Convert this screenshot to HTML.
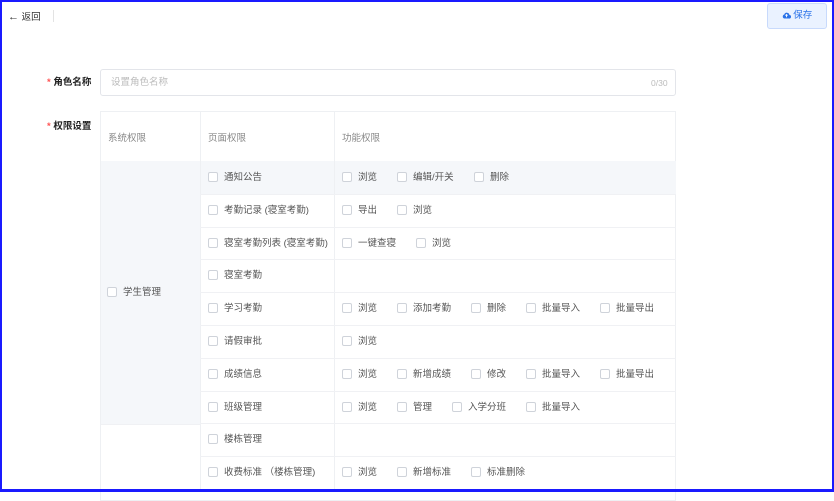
<!DOCTYPE html>
<html><head><meta charset="utf-8"><style>
*{margin:0;padding:0;box-sizing:border-box}
body{width:834px;height:492px;overflow:hidden;background:#fff;font-family:"Liberation Sans","Noto Sans CJK SC",sans-serif;font-size:9.5px;line-height:14px;color:#444;position:relative}
.frame{position:absolute;inset:0;border:2px solid #1a1aff;border-bottom-width:3px;pointer-events:none;z-index:10}
.a{position:absolute;white-space:nowrap}
.cb{position:absolute;width:10px;height:10px;border:1px solid #cfd3da;border-radius:2px;background:#fff}
.t{color:#555}
</style></head><body>
<div class="frame"></div>
<div class="a" style="left:8px;top:10px;font-size:9.5px;color:#333"><span style="font-size:11px">←</span> 返回</div>
<div class="a" style="left:53px;top:10px;width:1px;height:12px;background:#e3e3e3"></div>
<div class="a" style="left:767px;top:3px;width:60px;height:26px;background:#eaf2ff;border:1px solid #c8dafc;border-radius:3px;color:#2a72e8;font-size:9.5px;line-height:24px;text-align:center">
<svg width="9" height="8" viewBox="0 0 10 9" style="vertical-align:-1px"><path d="M2.5 8.5h5.5a2 2 0 0 0 .3-4 3 3 0 0 0-5.8-.6A2.4 2.4 0 0 0 2.5 8.5z" fill="#2a72e8"/><path d="M5 7V4M3.8 5.2L5 4l1.2 1.2" stroke="#fff" stroke-width="1" fill="none"/></svg> 保存</div>

<div class="a" style="left:47px;top:76px;font-size:9.5px;color:#222;font-weight:bold"><span style="color:#f55">*</span> 角色名称</div>
<div class="a" style="left:100px;top:69px;width:576px;height:27px;border:1px solid #e3e5ea;border-radius:3px"></div>
<div class="a" style="left:111px;top:76px;color:#bbb">设置角色名称</div>
<div class="a" style="left:651px;top:76px;color:#bbb;font-size:8.5px">0/30</div>

<div class="a" style="left:47px;top:120px;font-size:9.5px;color:#222;font-weight:bold"><span style="color:#f55">*</span> 权限设置</div>
<div class="a" style="left:100px;top:111px;width:576px;height:390px;border:1px solid #eef0f3"></div>
<div class="a" style="left:101px;top:161px;width:99px;height:263px;background:#f5f7fa"></div>
<div class="a" style="left:200px;top:161px;width:476px;height:33px;background:#f5f7fa"></div>
<div class="a" style="left:200px;top:112px;width:1px;height:380px;background:#eef0f3"></div>
<div class="a" style="left:334px;top:112px;width:1px;height:380px;background:#eef0f3"></div>
<div class="a t" style="left:108px;top:132px;color:#888">系统权限</div>
<div class="a t" style="left:208px;top:132px;color:#888">页面权限</div>
<div class="a t" style="left:342px;top:132px;color:#888">功能权限</div>
<div class="cb" style="left:107px;top:287px"></div><div class="a t" style="left:123px;top:286px">学生管理</div>

<div id="rows"></div>
<script>
var R=[["通知公告",[["浏览",342],["编辑/开关",397],["删除",474]]],
["考勤记录 (寝室考勤)",[["导出",342],["浏览",397]]],
["寝室考勤列表 (寝室考勤)",[["一键查寝",342],["浏览",416]]],
["寝室考勤",[]],
["学习考勤",[["浏览",342],["添加考勤",397],["删除",471],["批量导入",526],["批量导出",600]]],
["请假审批",[["浏览",342]]],
["成绩信息",[["浏览",342],["新增成绩",397],["修改",471],["批量导入",526],["批量导出",600]]],
["班级管理",[["浏览",342],["管理",397],["入学分班",452],["批量导入",526]]],
["楼栋管理",[]],
["收费标准 （楼栋管理)",[["浏览",342],["新增标准",397],["标准删除",471]]]];
var h="";
R.forEach(function(r,i){var top=161+i*32.8;var c=top+16;
if(i>0)h+='<div class="a" style="left:200px;top:'+top+'px;width:476px;height:1px;background:#f0f1f4"></div>';
h+='<div class="cb" style="left:208px;top:'+(c-5)+'px"></div><div class="a t" style="left:224px;top:'+(c-6)+'px">'+r[0]+'</div>';
r[1].forEach(function(f){h+='<div class="cb" style="left:'+f[1]+'px;top:'+(c-5)+'px"></div><div class="a t" style="left:'+(f[1]+16)+'px;top:'+(c-6)+'px">'+f[0]+'</div>';});});
h+='<div class="a" style="left:101px;top:424px;width:99px;height:1px;background:#f0f1f4"></div>';
document.getElementById("rows").innerHTML=h;
</script>
</body></html>
